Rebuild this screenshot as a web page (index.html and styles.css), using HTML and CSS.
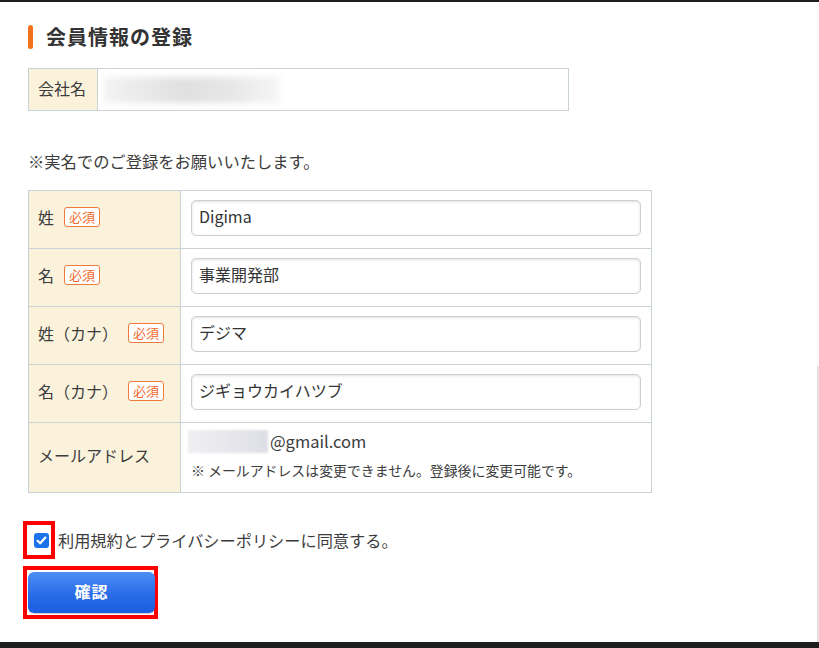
FILE: index.html
```html
<!DOCTYPE html>
<html lang="ja">
<head>
<meta charset="utf-8">
<link rel="stylesheet" href="styles.css">
</head>
<body>
<div class="topbar"></div>
<main class="main">
  <h1 class="title"><span class="title-bar"></span>会員情報の登録</h1>

  <table class="company">
    <tr>
      <th class="company-label">会社名</th>
      <td class="company-value"><div class="blur blur-company"></div></td>
    </tr>
  </table>

  <p class="note">※実名でのご登録をお願いいたします。</p>

  <table class="form">
    <tr>
      <th class="label"><span>姓</span><span class="req">必須</span></th>
      <td class="value"><div class="input">Digima</div></td>
    </tr>
    <tr>
      <th class="label"><span>名</span><span class="req">必須</span></th>
      <td class="value"><div class="input">事業開発部</div></td>
    </tr>
    <tr>
      <th class="label"><span>姓（カナ）</span><span class="req">必須</span></th>
      <td class="value"><div class="input">デジマ</div></td>
    </tr>
    <tr>
      <th class="label"><span>名（カナ）</span><span class="req">必須</span></th>
      <td class="value"><div class="input">ジギョウカイハツブ</div></td>
    </tr>
    <tr class="mail-row">
      <th class="label"><span>メールアドレス</span></th>
      <td class="value mail-value">
        <div class="mail-line"><div class="blur blur-mail"></div><span>@gmail.com</span></div>
        <div class="mail-note">※ メールアドレスは変更できません。登録後に変更可能です。</div>
      </td>
    </tr>
  </table>

  <div class="agree">
    <span class="mark mark-check">
      <span class="checkbox">
        <svg width="15" height="15" viewBox="0 0 15 15"><path d="M3.6 7.8 L6.2 10.3 L11.4 4.6" fill="none" stroke="#fff" stroke-width="2.2" stroke-linecap="round" stroke-linejoin="round"/></svg>
      </span>
    </span>
    <span class="agree-text">利用規約とプライバシーポリシーに同意する。</span>
  </div>

  <div class="mark mark-btn">
    <button class="btn" type="button">確認</button>
  </div>
</main>
<div class="bottombar"></div>
<div class="scrollline"></div>
</body>
</html>
```

FILE: styles.css
```css
html, body {
  margin: 0;
  padding: 0;
}
body {
  width: 819px;
  height: 648px;
  overflow: hidden;
  background: #fff;
  display: flex;
  flex-direction: column;
  font-family: "Noto Sans CJK JP", "Noto Sans", sans-serif;
  color: #3c3c3c;
}
.topbar {
  height: 2px;
  background: #1e1e1e;
  flex: none;
}
.bottombar {
  height: 6px;
  background: #1e1e1e;
  flex: none;
}
.scrollline {
  position: fixed;
  right: 0;
  top: 366px;
  bottom: 6px;
  width: 2px;
  background: #e2e2e2;
}
.main {
  flex: 1;
  padding-left: 28px;
}
.title {
  margin: 23px 0 0;
  height: 24px;
  display: flex;
  align-items: center;
  font-size: 20px;
  font-weight: 700;
  letter-spacing: 1px;
  color: #333;
  line-height: 24px;
}
.title-bar {
  width: 5px;
  height: 24px;
  border-radius: 3px;
  background: #f2711c;
  margin-right: 13px;
}
.company {
  margin-top: 19px;
  border-collapse: collapse;
  width: 541px;
  height: 43px;
}
.company th, .company td {
  border: 1px solid #c9d3d6;
  padding: 0;
}
.company-label {
  width: 59px;
  background: #fbf2dc;
  font-weight: 400;
  font-size: 16px;
  text-align: left;
  padding: 0 0 3px 9px !important;
  border-right: 1px dotted #b9c2c7 !important;
}
.company-value {
  padding-left: 6px !important;
}
.blur {
  filter: blur(3px);
}
.blur-company {
  width: 176px;
  height: 26px;
  background: linear-gradient(90deg, #f3f3f3 0%, #e0e0e0 45%, #e6e6e6 70%, #f6f6f6 100%);
}
.note {
  margin: 38px 0 0;
  font-size: 16.3px;
  line-height: 24px;
  color: #3c3c3c;
}
.form {
  margin-top: 17px;
  border-collapse: collapse;
  width: 624px;
}
.form th, .form td {
  border: 1px solid #c9d3d6;
  padding: 0;
}
.form tr {
  height: 58px;
}
.form tr.mail-row {
  height: 70px;
}
.label {
  width: 142px;
  background: #fbf2dc;
  font-weight: 400;
  font-size: 16px;
  text-align: left;
  padding: 0 0 8px 9px !important;
  border-right: 1px dotted #b9c2c7 !important;
  white-space: nowrap;
}
.label span:first-child {
  vertical-align: middle;
}
.req {
  display: inline-block;
  vertical-align: middle;
  margin-left: 10px;
  border: 1px solid #f07a3a;
  border-radius: 3px;
  color: #f0692a;
  background: #fff;
  font-size: 13px;
  line-height: 18px;
  padding: 0 4px;
}
.value {
  padding: 9px 10px 0 !important;
  vertical-align: top;
}
.input {
  height: 32px;
  border: 1px solid #cfcfcf;
  border-radius: 5px;
  box-shadow: inset 0 1px 3px rgba(0, 0, 0, 0.12);
  background: #fff;
  font-size: 16px;
  line-height: 30px;
  padding: 0 0 2px 7px;
  color: #333;
}
.mail-value {
  padding: 0 0 0 7px !important;
  vertical-align: top;
}
.mail-line {
  display: flex;
  align-items: center;
  margin-top: 6px;
  height: 24px;
  font-size: 16.5px;
}
.blur-mail {
  width: 80px;
  height: 23px;
  margin-right: 2px;
  filter: blur(1px);
  background: linear-gradient(90deg, #f0f0f3, #dedee6);
}
.mail-note {
  margin-top: 7px;
  padding-left: 3px;
  font-size: 13.9px;
  line-height: 20px;
  color: #3c3c3c;
}
.agree {
  margin-top: 28px;
  margin-left: -5px;
  display: flex;
  align-items: center;
  height: 38px;
}
.mark {
  border: 4px solid #ff0000;
  box-sizing: border-box;
}
.mark-check {
  width: 32px;
  height: 38px;
  display: flex;
  align-items: center;
  padding-left: 7px;
}
.checkbox {
  width: 15px;
  height: 15px;
  border-radius: 3px;
  background: #1a73e8;
  display: block;
}
.checkbox svg {
  display: block;
}
.agree-text {
  margin-left: 3px;
  font-size: 16.2px;
  line-height: 24px;
  color: #3c3c3c;
}
.mark-btn {
  margin-top: 7px;
  margin-left: -5px;
  width: 135px;
  height: 53px;
  padding: 2px 0 0 1px;
}
.btn {
  display: block;
  width: 127px;
  height: 41px;
  border: none;
  border-radius: 6px;
  background: linear-gradient(180deg, #4d8ef5 0%, #2a6ce8 55%, #1a5ddf 100%);
  box-shadow: 0 1px 1px rgba(0, 0, 0, 0.2);
  color: #fff;
  font-family: "Noto Sans CJK JP", sans-serif;
  font-size: 16px;
  font-weight: 700;
  letter-spacing: 1px;
  padding: 0 0 3px;
}
```
